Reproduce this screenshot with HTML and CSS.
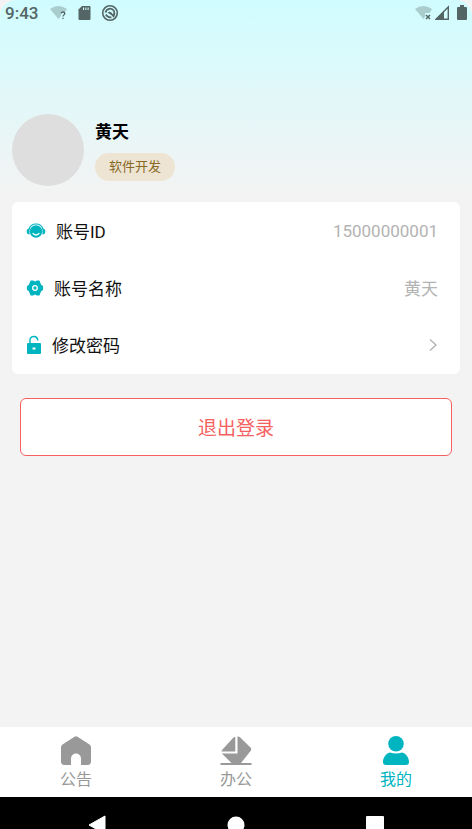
FILE: index.html
```
<!DOCTYPE html>
<html lang="zh-CN">
<head>
<meta charset="utf-8">
<meta name="viewport" content="width=device-width, initial-scale=1">
<title>我的</title>
<link rel="stylesheet" href="styles.css">
</head>
<body>
<div class="screen">
  <header class="status">
    <time class="clock">9:43</time>
    <svg class="st-wifi" width="18" height="16" viewBox="0 0 18 16" aria-hidden="true">
      <path d="M0 4Q8 -2 17 4L15 7H11V11L8.500 14Z" fill="#a9cccd"/>
      <path d="M11.300 8.600Q11.300 7 13 7T14.800 8.600C14.800 9.800 13 10 13 11.500M13 12.700V14" fill="none" stroke="#536565" stroke-width="1.300"/>
    </svg>
    <svg class="st-sd" width="13" height="16" viewBox="0 0 13 16" aria-hidden="true">
      <path d="M4 1H11.500Q12.500 1 12.500 2V14Q12.500 15 11.500 15H1.500Q.5 15 .5 14V4.500Z" fill="#536565"/>
      <path d="M5.500 2.500V5M7.800 2.500V5M10.100 2.500V5" stroke="#d5fbfd" stroke-width="1.100"/>
    </svg>
    <svg class="st-app" width="18" height="18" viewBox="0 0 18 18" aria-hidden="true">
      <circle cx="9" cy="9" r="7.300" fill="none" stroke="#536565" stroke-width="1.600"/>
      <path d="M4.500 8.500A4.600 4.600 0 0 1 13 7Q14 9.500 12.600 12.200L9.300 8.600" fill="none" stroke="#536565" stroke-width="1.700"/>
      <path d="M6.500 8.500L9 7.500L12 11.500L8.500 10Z" fill="#536565"/>
      <path d="M4.800 10.500Q6.500 13.500 10.500 13.500" fill="none" stroke="#536565" stroke-width="1.600"/>
    </svg>
    <span class="spacer"></span>
    <svg class="st-wifi2" width="18" height="16" viewBox="0 0 18 16" aria-hidden="true">
      <path d="M0 4Q8 -2 17 4L14.500 8H10V12L8.500 14Z" fill="#a9cccd"/>
      <path d="M11 10L15 14M15 10L11 14" stroke="#536565" stroke-width="1.500"/>
    </svg>
    <svg class="st-cell" width="15" height="16" viewBox="0 0 15 16" aria-hidden="true">
      <path d="M1 14.300L13.300 2V14.300Z" fill="none" stroke="#536565" stroke-width="1.400"/>
      <path d="M0 15L9 6V15Z" fill="#536565"/>
    </svg>
    <svg class="st-batt" width="10" height="16" viewBox="0 0 10 16" aria-hidden="true">
      <path d="M3 0H7V2H9Q10 2 10 3V14Q10 15 9 15H1Q0 15 0 14V3Q0 2 1 2H3Z" fill="#536565"/>
    </svg>
  </header>

  <main class="content">
    <section class="profile">
      <div class="avatar"></div>
      <div class="who">
        <h1 class="name">黄天</h1>
        <span class="badge">软件开发</span>
      </div>
    </section>

    <section class="card">
      <div class="row">
        <svg width="20" height="18" viewBox="0 0 20 18" aria-hidden="true">
          <path d="M3 7.500A7.200 7.200 0 0 1 17 7.500" fill="none" stroke="#00b5bf" stroke-width="1.200"/>
          <path d="M3.500 6.500V12.500Q.7 12.500 .7 9.500T3.500 6.500ZM16.500 6.500V12.500Q19.300 12.500 19.300 9.500T16.500 6.500Z" fill="#00b5bf"/>
          <circle cx="10" cy="9.500" r="6.200" fill="#00b5bf"/>
          <path d="M7 11.500Q10 14.500 13 11.500" fill="none" stroke="#fff" stroke-width="1.200" stroke-linecap="round"/>
        </svg>
        <span class="label">账号ID</span>
        <span class="value">15000000001</span>
      </div>
      <div class="row">
        <svg width="18" height="18" viewBox="0 0 18 18" aria-hidden="true">
          <path d="M5 2H7L9 3.200L11 2H13L14.500 6L16.500 7.500V10.500L14.500 12L13 16H11L9 14.800L7 16H5L3.500 12L1.500 10.500V7.500L3.500 6Z" fill="#00b5bf" stroke="#00b5bf" stroke-width="1.200" stroke-linejoin="round"/>
          <circle cx="9" cy="9" r="2.300" fill="none" stroke="#fff" stroke-width="1.300"/>
        </svg>
        <span class="label">账号名称</span>
        <span class="value">黄天</span>
      </div>
      <a class="row" href="#password">
        <svg width="16" height="20" viewBox="0 0 16 20" aria-hidden="true">
          <path d="M4 9V5.500A3.900 3.900 0 0 1 11.700 4.500V5.500" fill="none" stroke="#00b5bf" stroke-width="1.400"/>
          <rect x="1" y="8" width="14" height="11" rx="1" fill="#00b5bf"/>
          <rect x="6.500" y="12.500" width="3" height="2" rx=".5" fill="#fff"/>
        </svg>
        <span class="label">修改密码</span>
        <svg class="chevron" width="10" height="14" viewBox="0 0 10 14" aria-hidden="true">
          <path d="M2 1.500L8 7L2 12.500" fill="none" stroke="#b4b4b4" stroke-width="1.400"/>
        </svg>
      </a>
    </section>

    <button class="logout" type="button">退出登录</button>
  </main>

  <nav class="tabs">
    <a class="tab" href="#notice">
      <svg width="32" height="32" viewBox="0 0 32 32" aria-hidden="true">
        <path d="M14.500 1.800Q16 .7 17.500 1.800L29.500 9.500Q31 10.500 31 12V26.500Q31 30 27.500 30H21V23.500A5 5 0 0 0 11 23.500V30H4.500Q1 30 1 26.500V12Q1 10.500 2.500 9.500Z" fill="#999"/>
      </svg>
      公告
    </a>
    <a class="tab" href="#office">
      <svg width="32" height="32" viewBox="0 0 32 32" aria-hidden="true">
        <path d="M15.300 2V16.500H1.500Q1.500 15.500 2.500 14.500L13 3Q14.200 1.700 15.300 2Z" fill="#999"/>
        <path d="M17.500 1.500Q19 1.300 20 2.300L30.500 12.500Q32 14 30.500 16L21 28H31.500V30H.5V28H11.500L1.800 18.500H17.500Z" fill="#999"/>
      </svg>
      办公
    </a>
    <a class="tab active" href="#mine" aria-current="page">
      <svg width="32" height="32" viewBox="0 0 32 32" aria-hidden="true">
        <circle cx="16" cy="8.800" r="7.800" fill="#00b5bf"/>
        <path d="M10 17.500Q16 19.500 22 17.500C26.500 18.500 29 23 29 27Q29 30 26 30H6Q3 30 3 27C3 23 5.500 18.500 10 17.500Z" fill="#00b5bf"/>
      </svg>
      我的
    </a>
  </nav>

  <div class="sysnav">
    <button type="button" aria-label="返回"><svg width="18" height="20" viewBox="0 0 18 20"><path d="M17 1V19L1 10Z" fill="#fff" stroke="#fff" stroke-linejoin="round"/></svg></button>
    <button type="button" aria-label="主页"><svg width="18" height="20" viewBox="0 0 18 20"><circle cx="9" cy="10" r="8.500" fill="#fff"/></svg></button>
    <button type="button" aria-label="概览"><svg width="18" height="20" viewBox="0 0 18 20"><rect y="1" width="18" height="18" rx="1" fill="#fff"/></svg></button>
  </div>
</div>
</body>
</html>
```
FILE: styles.css
```
* { box-sizing: border-box; }

body {
  margin: 0;
  background: #f3f3f3;
  color: #111;
  font-family: Roboto, "Noto Sans CJK SC", sans-serif;
}

a { color: inherit; text-decoration: none; }

.screen {
  display: flex;
  flex-direction: column;
  height: 100vh;
  overflow: hidden;
  border-radius: 16px 16px 0 0;
  background: linear-gradient(#d0fcff, #f3f3f3 192px);
}

.status {
  display: flex;
  align-items: center;
  height: 26px;
  padding: 0 5px;
  color: #536565;
}

.clock { font-size: 17px; font-weight: 500; margin-right: 12px; }
.st-wifi { margin-right: 10px; }
.st-sd { margin-right: 10px; }
.st-wifi2 { margin-right: 2px; }
.st-cell { margin-right: 7px; }
.spacer { flex: 1; }

.content { flex: 1; padding: 88px 12px 0; }

.profile { display: flex; gap: 11px; align-items: center; }

.avatar {
  width: 72px;
  height: 72px;
  border-radius: 50%;
  background: #dedede;
}

.who {
  display: flex;
  flex-direction: column;
  align-items: flex-start;
  gap: 9px;
}

.name {
  margin: 0;
  font-size: 17px;
  line-height: 24px;
  font-weight: 700;
  color: #000;
}

.badge {
  padding: 0 14px;
  border-radius: 14px;
  background: #eee4d3;
  color: #866925;
  font-size: 13px;
  line-height: 28px;
}

.card {
  margin-top: 16px;
  padding-bottom: 1px;
  border-radius: 6px;
  background: #fff;
}

.row {
  display: flex;
  align-items: center;
  height: 57px;
  padding: 0 22px 0 14px;
  font-size: 17px;
}

.label { flex: 1; margin-left: 10px; }
.value { color: #b3b3b3; }

.logout {
  display: block;
  width: calc(100% - 16px);
  height: 58px;
  margin: 24px 8px 0;
  padding: 0 0 2px;
  border: 1px solid #f56060;
  border-radius: 6px;
  background: #fff;
  color: #f56060;
  font-family: inherit;
  font-size: 19px;
}

.tabs {
  display: flex;
  justify-content: space-between;
  height: 70px;
  padding: 8px 60px 0;
  background: #fff;
  color: #999;
  font-size: 16px;
  line-height: 26px;
}

.tab { display: flex; flex-direction: column; align-items: center; }
.active { color: #00b5bf; }

.sysnav {
  display: grid;
  grid-template-columns: repeat(3, 1fr);
  justify-items: center;
  align-items: start;
  height: 32px;
  padding: 18px 27px 0;
  overflow: hidden;
  background: #000;
}

.sysnav button { padding: 0; border: 0; background: none; }
.sysnav svg, .tab svg { display: block; }
```
